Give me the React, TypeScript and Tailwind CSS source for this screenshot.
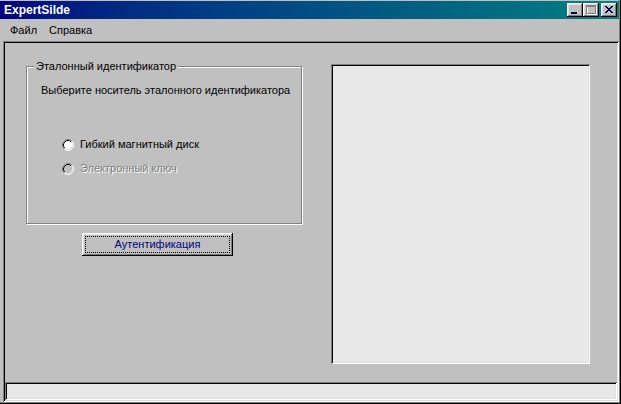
import React from "react";

const raised =
  "shadow-[inset_-1px_-1px_#000,inset_1px_1px_#fff,inset_-2px_-2px_#808080,inset_2px_2px_#dfdfdf]";
const sunken =
  "shadow-[inset_1px_1px_#808080,inset_-1px_-1px_#fff,inset_2px_2px_#000,inset_-2px_-2px_#dfdfdf]";

function Radio({ disabled }: { disabled?: boolean }) {
  return (
    <svg width="12" height="12" viewBox="0 0 12 12" className="shrink-0">
      <circle cx="6" cy="6" r="5" fill={disabled ? "#c0c0c0" : "#fff"} />
      <path d="M2.11 9.89 A5.5 5.5 0 0 1 9.89 2.11" fill="none" stroke="#808080" strokeWidth="1" />
      <path d="M2.82 9.18 A4.5 4.5 0 0 1 9.18 2.82" fill="none" stroke="#000" strokeWidth="1" />
      <path d="M9.89 2.11 A5.5 5.5 0 0 1 2.11 9.89" fill="none" stroke="#fff" strokeWidth="1" />
      <path d="M9.18 2.82 A4.5 4.5 0 0 1 2.82 9.18" fill="none" stroke="#dfdfdf" strokeWidth="1" />
    </svg>
  );
}

function TitleButton({ children }: { children: React.ReactNode }) {
  return (
    <div className={`w-[16px] h-[14px] bg-[#c0c0c0] ${raised} relative`}>
      <svg width="16" height="14" viewBox="0 0 16 14" shapeRendering="crispEdges" className="block">
        {children}
      </svg>
    </div>
  );
}

const X_ROWS = ["xx....xx", ".xx..xx.", "..xxxx..", "...xx...", "..xxxx..", ".xx..xx.", "xx....xx"];

export default function App() {
  const font = { fontFamily: '"Liberation Sans", Arial, sans-serif' };
  return (
    <div
      className="w-[621px] h-[404px] bg-[#c0c0c0] flex flex-col pr-[2px] pb-[2px] shadow-[inset_-1px_-1px_#000,inset_-2px_-2px_#808080] overflow-hidden select-none"
      style={font}
    >
      {/* Title bar */}
      <div className="mt-[1px] h-[18px] flex items-center bg-linear-to-r from-[#000080] to-[#008080] pl-[4px] pr-[2px] shrink-0">
        <span className="text-white font-bold text-[12px] leading-[18px] flex-1">ExpertSilde</span>
        <div className="flex items-center">
          <TitleButton>
            <rect x="4" y="9" width="6" height="2" fill="#000040" />
          </TitleButton>
          <TitleButton>
            <rect x="4" y="3" width="9" height="8" fill="none" stroke="#fff" strokeWidth="1" transform="translate(0.5 0.5)" />
            <rect x="3" y="2" width="9" height="8" fill="none" stroke="#808080" strokeWidth="1" transform="translate(0.5 0.5)" />
            <rect x="3" y="2" width="9" height="2" fill="#808080" />
          </TitleButton>
          <div className="w-[2px]" />
          <TitleButton>
            {X_ROWS.flatMap((row, y) =>
              row.split("").map((c, x) =>
                c === "x" ? <rect key={`${x}-${y}`} x={4 + x} y={3 + y} width="1" height="1" fill="#000040" /> : null
              )
            )}
          </TitleButton>
        </div>
      </div>

      {/* Menu bar */}
      <div className="h-[22px] flex items-center pl-[10px] gap-[12px] text-[11px] leading-[13px] text-black pt-[1px] shrink-0">
        <span>Файл</span>
        <span>Справка</span>
      </div>

      {/* Client area */}
      <div className={`ml-[3px] flex-1 flex flex-col p-[2px] ${sunken}`}>
        <div className="flex-1 flex items-start">
          {/* Left column */}
          <div className="ml-[21px] mt-[23px] w-[276px] flex flex-col">
            <div className="relative h-[158px] border border-[#808080] shadow-[inset_1px_1px_#fff,1px_1px_#fff] pl-[14px] pt-[17px] text-[11px] leading-[13px] text-black">
              <span className="absolute left-[7px] top-[-7px] bg-[#c0c0c0] px-[2px] leading-[13px]">
                Эталонный идентификатор
              </span>
              <div>Выберите носитель эталонного идентификатора</div>
              <div className="mt-[41px] ml-[21px] flex items-center gap-[6px] h-[13px]">
                <Radio />
                <span>Гибкий магнитный диск</span>
              </div>
              <div className="mt-[11px] ml-[21px] flex items-center gap-[6px] h-[13px]">
                <Radio disabled />
                <span className="text-[#808080] [text-shadow:1px_1px_0_#fff]">Электронный ключ</span>
              </div>
            </div>
            <div className={`mt-[9px] ml-[56px] w-[151px] h-[23px] bg-[#c0c0c0] p-[3px] ${raised}`}>
              <div className="h-full border border-dotted border-black flex items-center justify-center text-[11px] leading-[13px] text-[#000080]">
                Аутентификация
              </div>
            </div>
          </div>

          {/* Right panel */}
          <div className={`ml-[29px] mt-[21px] w-[259px] h-[300px] bg-[#e8e8e8] ${sunken}`} />
        </div>

        {/* Status bar */}
        <div className={`h-[18px] bg-[#e8e8e8] shrink-0 ${sunken}`} />
      </div>
    </div>
  );
}
